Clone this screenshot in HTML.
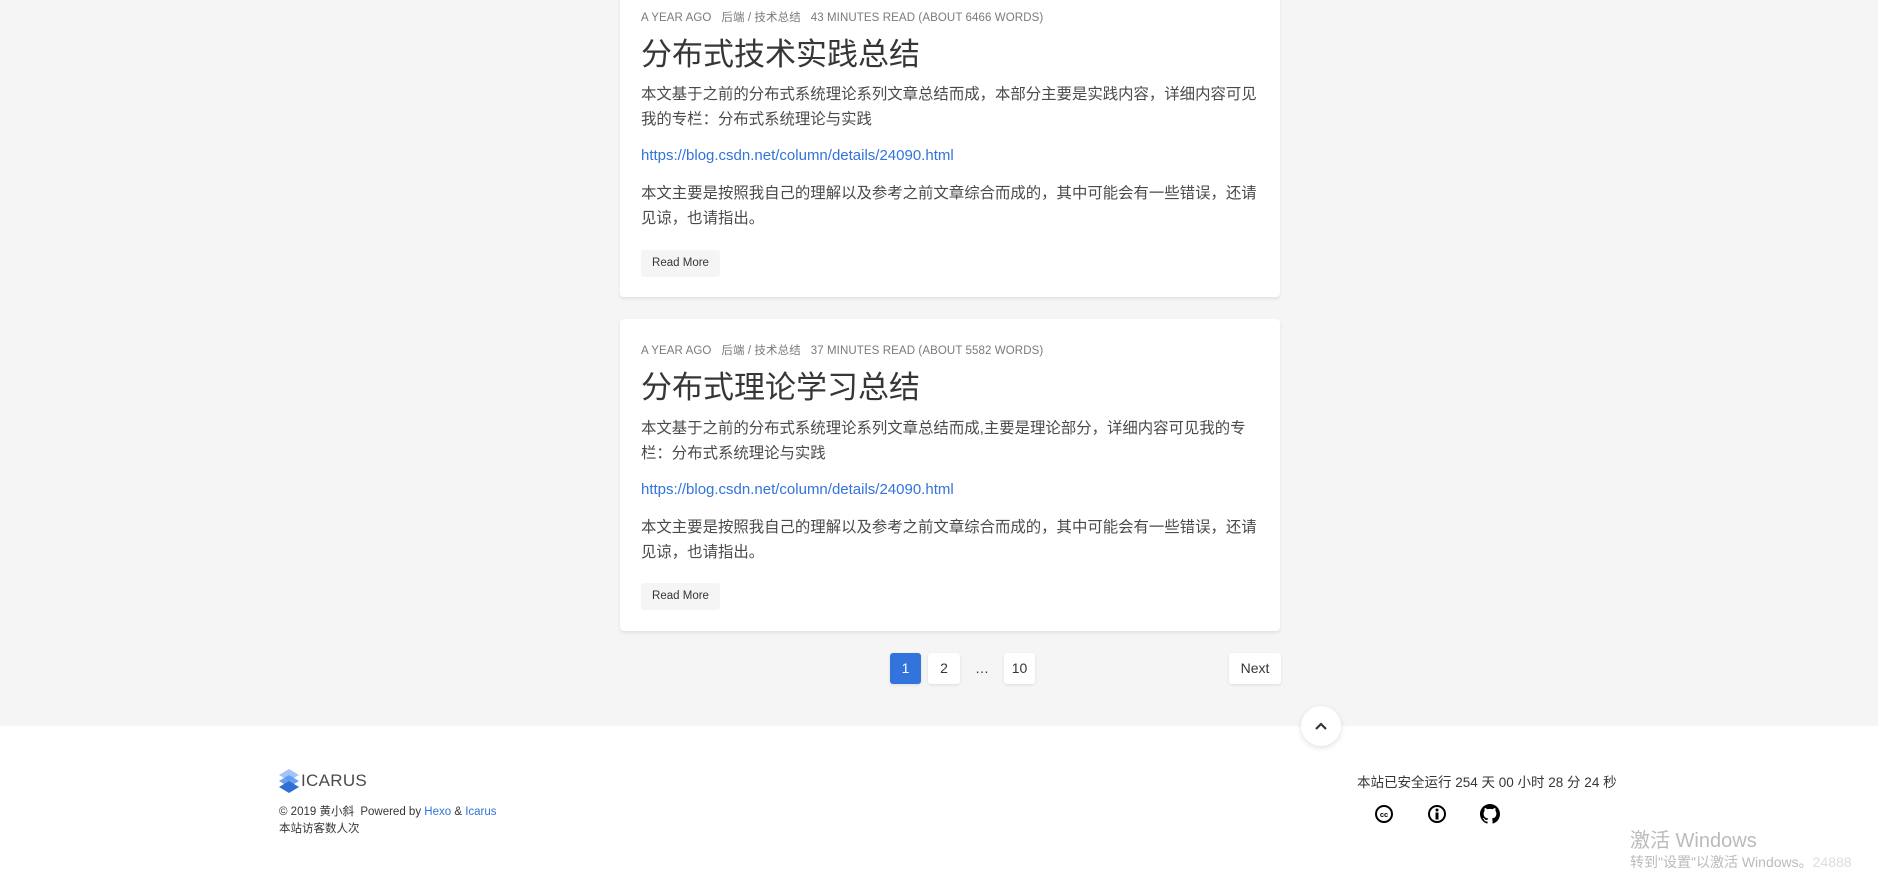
<!DOCTYPE html>
<html><head><meta charset="utf-8"><style>
*{margin:0;padding:0;box-sizing:border-box}
body{width:1878px;height:882px;overflow:hidden;background:#fff;font-family:"Liberation Sans","Noto Sans CJK SC",sans-serif;color:#4a4a4a;position:relative}
.bg{position:absolute;left:0;top:0;width:1878px;height:726px;background:#f5f5f5}
.card{position:absolute;left:620px;width:660px;background:#fff;border-radius:4px;box-shadow:0 2px 3px rgba(0,0,0,.08)}
.a{position:absolute;left:641px;white-space:nowrap}
.meta{font-size:11.5px;color:#7a7a7a;letter-spacing:.1px}
.title{font-size:31px;color:#363636}
.p{font-size:15.4px;line-height:25px;width:627px;white-space:normal}
.link{font-size:15px;color:#3273dc}
.btn{background:#f5f5f5;border-radius:3px;font-size:11.5px;color:#363636;width:79px;height:27px;line-height:27px;text-align:center}
.pg{position:absolute;top:653px;height:31px;line-height:31px;text-align:center;font-size:14px;color:#363636;background:#fff;border-radius:3px;box-shadow:0 1px 3px rgba(0,0,0,.1)}
.f{position:absolute;white-space:nowrap;font-size:11.5px;color:#363636}
</style></head><body>
<div class="bg"></div>
<div class="card" style="top:-10px;height:307px"></div>
<div class="card" style="top:319px;height:312px"></div>

<div class="a meta" style="top:9px">A YEAR AGO &nbsp;&nbsp;后端 / 技术总结 &nbsp;&nbsp;43 MINUTES READ (ABOUT 6466 WORDS)</div>
<div class="a title" style="top:29px">分布式技术实践总结</div>
<div class="a p" style="top:82px">本文基于之前的分布式系统理论系列文章总结而成，本部分主要是实践内容，详细内容可见我的专栏：分布式系统理论与实践</div>
<div class="a link" style="top:147px">https://blog.csdn.net/column/details/24090.html</div>
<div class="a p" style="top:181px">本文主要是按照我自己的理解以及参考之前文章综合而成的，其中可能会有一些错误，还请见谅，也请指出。</div>
<div class="a btn" style="top:250px">Read More</div>

<div class="a meta" style="top:342px">A YEAR AGO &nbsp;&nbsp;后端 / 技术总结 &nbsp;&nbsp;37 MINUTES READ (ABOUT 5582 WORDS)</div>
<div class="a title" style="top:362px">分布式理论学习总结</div>
<div class="a p" style="top:416px">本文基于之前的分布式系统理论系列文章总结而成,主要是理论部分，详细内容可见我的专栏：分布式系统理论与实践</div>
<div class="a link" style="top:481px">https://blog.csdn.net/column/details/24090.html</div>
<div class="a p" style="top:515px">本文主要是按照我自己的理解以及参考之前文章综合而成的，其中可能会有一些错误，还请见谅，也请指出。</div>
<div class="a btn" style="top:583px">Read More</div>

<div class="pg" style="left:890px;width:31px;background:#3273dc;color:#fff">1</div>
<div class="pg" style="left:928px;width:32px">2</div>
<div class="pg" style="left:972px;width:20px;background:none;box-shadow:none">…</div>
<div class="pg" style="left:1004px;width:31px">10</div>
<div class="pg" style="left:1229px;width:52px">Next</div>

<div style="position:absolute;left:1301px;top:706px;width:40px;height:40px;border-radius:50%;background:#fff;box-shadow:0 2px 6px rgba(0,0,0,.12);text-align:center">
<svg width="14" height="10" viewBox="0 0 14 10" style="margin-top:15px"><path d="M2 8 L7 3 L12 8" stroke="#363636" stroke-width="2.2" fill="none"/></svg></div>

<svg style="position:absolute;left:279px;top:769px" width="20" height="24" viewBox="0 0 20 24">
<path d="M10 0 L20 6 L10 12 L0 6Z" fill="#a3c4f7"/><path d="M10 6 L20 12 L10 18 L0 12Z" fill="#5d97ec" opacity=".9"/><path d="M10 12 L20 18 L10 24 L0 18Z" fill="#2f6fd6"/></svg>
<div class="f" style="left:301px;top:771px;font-size:17px;color:#4a4a4a;letter-spacing:.3px">ICARUS</div>
<div class="f" style="left:279px;top:803px">© 2019 黄小斜 &nbsp;Powered by <span style="color:#3273dc">Hexo</span> &amp; <span style="color:#3273dc">Icarus</span></div>
<div class="f" style="left:279px;top:820px">本站访客数人次</div>
<div class="f" style="left:1357px;top:771px;font-size:13.5px">本站已安全运行 254 天 00 小时 28 分 24 秒</div>
<svg style="position:absolute;left:1374px;top:804px" width="20" height="20" viewBox="0 0 20 20"><circle cx="10" cy="10" r="8" stroke="#000" stroke-width="2" fill="none"/><text x="10" y="13" font-size="7.5" font-weight="bold" text-anchor="middle" font-family="Liberation Sans">cc</text></svg>
<svg style="position:absolute;left:1427px;top:804px" width="20" height="20" viewBox="0 0 20 20"><circle cx="10" cy="10" r="8" stroke="#000" stroke-width="2" fill="none"/><circle cx="10" cy="6" r="1.5"/><rect x="8.5" y="8.5" width="3" height="7"/></svg>
<svg style="position:absolute;left:1480px;top:804px" width="20" height="20" viewBox="0 0 16 16"><path d="M8 0C3.58 0 0 3.58 0 8c0 3.54 2.29 6.53 5.47 7.59.4.07.55-.17.55-.38v-1.34c-2.23.48-2.7-1.07-2.7-1.07-.36-.92-.89-1.17-.89-1.17-.73-.5.06-.49.06-.49.8.06 1.23.83 1.23.83.71 1.22 1.87.87 2.33.66.07-.52.28-.87.5-1.07-1.78-.2-3.64-.89-3.64-3.95 0-.87.31-1.59.82-2.15-.08-.2-.36-1.02.08-2.12 0 0 .67-.21 2.2.82a7.6 7.6 0 0 1 4 0c1.53-1.04 2.2-.82 2.2-.82.44 1.1.16 1.92.08 2.12.51.56.82 1.27.82 2.15 0 3.07-1.87 3.75-3.65 3.95.29.25.54.73.54 1.48v2.2c0 .21.15.46.55.38A8.01 8.01 0 0 0 16 8c0-4.42-3.58-8-8-8z"/></svg>

<div class="f" style="left:1630px;top:824px;font-size:20px;color:#bbb">激活 Windows</div>
<div class="f" style="left:1630px;top:852px;font-size:14px;color:#bbb">转到"设置"以激活 Windows。<span style="color:#ddd">24888</span></div>
</body></html>
